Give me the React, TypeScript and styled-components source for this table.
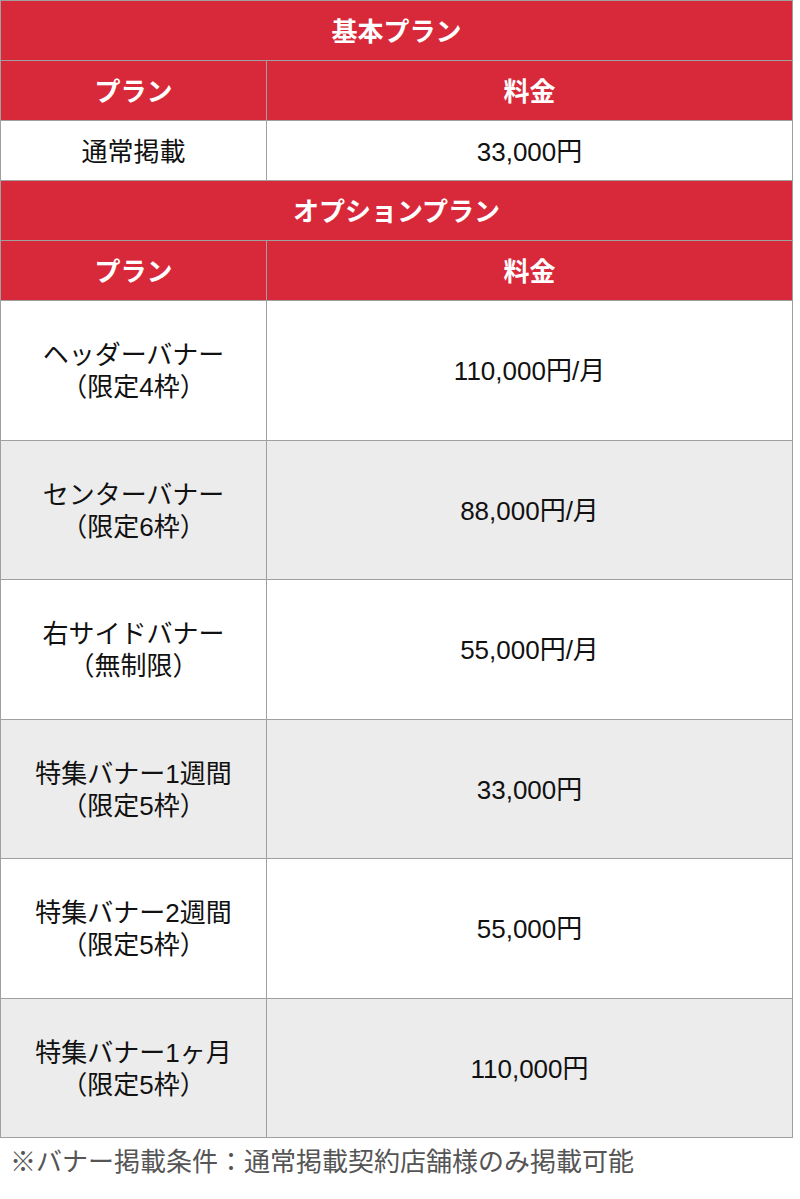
import React from "react";
import styled, { createGlobalStyle } from "styled-components";

const GlobalStyle = createGlobalStyle`
  body {
    margin: 0;
    background: #fff;
    font-family: "Liberation Sans", "Noto Sans CJK JP", sans-serif;
  }
`;

const Table = styled.div`
  width: 793px;
  box-sizing: border-box;
  border-top: 1px solid #a0a0a0;
  border-left: 1px solid #a0a0a0;
`;

const Row = styled.div<{ $tall?: boolean; $shade?: boolean; $head?: boolean }>`
  display: flex;
  height: ${(p) => (p.$tall ? "139.5px" : "60px")};
  background: ${(p) => (p.$head ? "#d8293b" : p.$shade ? "#ececec" : "#fff")};
  color: ${(p) => (p.$head ? "#fff" : "#111")};
  font-weight: ${(p) => (p.$head ? "bold" : "normal")};
`;

const Cell = styled.div<{ $wide?: boolean; $full?: boolean }>`
  box-sizing: border-box;
  width: ${(p) => (p.$full ? "792px" : p.$wide ? "526px" : "266px")};
  border-right: 1px solid #a0a0a0;
  border-bottom: 1px solid #a0a0a0;
  display: flex;
  flex-direction: column;
  align-items: center;
  justify-content: center;
  padding-top: 2px;
  text-align: center;
  font-size: 26px;
  line-height: 32px;
`;

const Note = styled.p`
  margin: 8px 0 0 10px;
  font-size: 26px;
  line-height: 32px;
  color: #555;
`;

type Option = { name: string; limit: string; price: string };

const options: Option[] = [
  { name: "ヘッダーバナー", limit: "（限定4枠）", price: "110,000円/月" },
  { name: "センターバナー", limit: "（限定6枠）", price: "88,000円/月" },
  { name: "右サイドバナー", limit: "（無制限）", price: "55,000円/月" },
  { name: "特集バナー1週間", limit: "（限定5枠）", price: "33,000円" },
  { name: "特集バナー2週間", limit: "（限定5枠）", price: "55,000円" },
  { name: "特集バナー1ヶ月", limit: "（限定5枠）", price: "110,000円" },
];

const HeadPair = () => (
  <Row $head>
    <Cell>プラン</Cell>
    <Cell $wide>料金</Cell>
  </Row>
);

export default function App() {
  return (
    <>
      <GlobalStyle />
      <Table>
        <Row $head>
          <Cell $full>基本プラン</Cell>
        </Row>
        <HeadPair />
        <Row>
          <Cell>通常掲載</Cell>
          <Cell $wide>33,000円</Cell>
        </Row>
        <Row $head>
          <Cell $full>オプションプラン</Cell>
        </Row>
        <HeadPair />
        {options.map((o, i) => (
          <Row key={o.name} $tall $shade={i % 2 === 1}>
            <Cell>
              <span>{o.name}</span>
              <span>{o.limit}</span>
            </Cell>
            <Cell $wide>{o.price}</Cell>
          </Row>
        ))}
      </Table>
      <Note>※バナー掲載条件：通常掲載契約店舗様のみ掲載可能</Note>
    </>
  );
}
